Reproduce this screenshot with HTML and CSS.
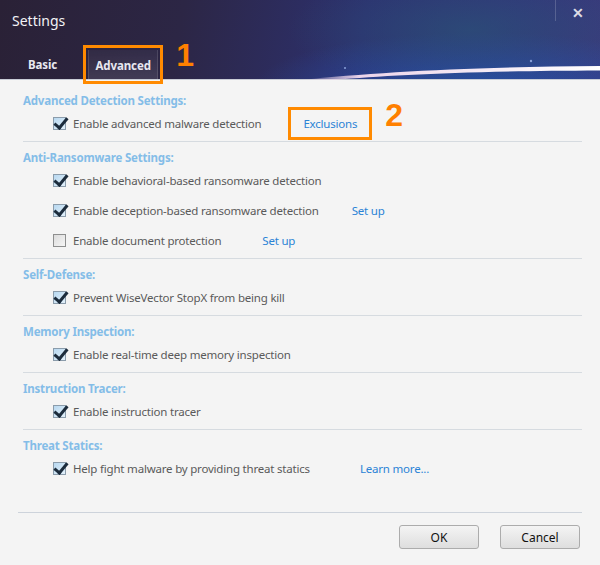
FILE: index.html
```html
<!DOCTYPE html>
<html lang="en">
<head>
    <meta charset="UTF-8">
    <title>Settings</title>
    <link rel="stylesheet" href="styles.css">
</head>
<body>
<div class="dialog">
    <div class="titlebar">
        <svg class="swoosh" width="600" height="80" viewBox="0 0 600 80">
            <defs>
                <linearGradient id="streak" x1="0" y1="0" x2="1" y2="0">
                    <stop offset="0" stop-color="#f4d8ec" stop-opacity="0"/>
                    <stop offset="0.2" stop-color="#f6dcef" stop-opacity="0.95"/>
                    <stop offset="1" stop-color="#ffffff"/>
                </linearGradient>
            </defs>
            <path d="M300 80 C 380 72, 470 67, 600 66 L 600 70.5 C 470 71, 390 75, 335 80 Z" fill="url(#streak)"/>
            <circle cx="345" cy="68" r="1" fill="#8aa0d8"/>
            <circle cx="531" cy="61" r="1.2" fill="#8aa0d8"/>
        </svg>
        <div class="title-row">
            <span class="title">Settings</span>
            <span class="sep"></span>
            <span class="close">&#x2715;</span>
        </div>
        <div class="tabs">
            <span class="tab">Basic</span>
            <span class="tab active">Advanced</span>
            <span class="marker marker-1">1</span>
        </div>
    </div>

    <div class="content">
        <div class="section">
            <div class="heading">Advanced Detection Settings:</div>
            <div class="row">
                <span class="box checked"></span>
                <span class="label">Enable advanced malware detection</span>
                <span class="link link-exclusions">Exclusions</span>
                <span class="marker marker-2">2</span>
            </div>
        </div>
        <div class="section">
            <div class="heading">Anti-Ransomware Settings:</div>
            <div class="row">
                <span class="box checked"></span>
                <span class="label">Enable behavioral-based ransomware detection</span>
            </div>
            <div class="row">
                <span class="box checked"></span>
                <span class="label">Enable deception-based ransomware detection</span>
                <span class="link link-setup1">Set up</span>
            </div>
            <div class="row">
                <span class="box"></span>
                <span class="label">Enable document protection</span>
                <span class="link link-setup2">Set up</span>
            </div>
        </div>
        <div class="section">
            <div class="heading">Self-Defense:</div>
            <div class="row">
                <span class="box checked"></span>
                <span class="label">Prevent WiseVector StopX from being kill</span>
            </div>
        </div>
        <div class="section">
            <div class="heading">Memory Inspection:</div>
            <div class="row">
                <span class="box checked"></span>
                <span class="label">Enable real-time deep memory inspection</span>
            </div>
        </div>
        <div class="section">
            <div class="heading">Instruction Tracer:</div>
            <div class="row">
                <span class="box checked"></span>
                <span class="label">Enable instruction tracer</span>
            </div>
        </div>
        <div class="section last">
            <div class="heading">Threat Statics:</div>
            <div class="row">
                <span class="box checked"></span>
                <span class="label">Help fight malware by providing threat statics</span>
                <span class="link link-learn">Learn more...</span>
            </div>
        </div>
    </div>

    <div class="footer">
        <button class="btn">OK</button>
        <button class="btn">Cancel</button>
    </div>
</div>
</body>
</html>
```

FILE: styles.css
```css
body {
    margin: 0;
    font-family: "Noto Sans", "Open Sans", sans-serif;
    background: #f4f4f4;
}
.dialog {
    width: 600px;
    height: 565px;
    display: flex;
    flex-direction: column;
    background: #f4f4f4;
    overflow: hidden;
}
.titlebar {
    position: relative;
    height: 79px;
    border-bottom: 1px solid #c9cdd6;
    background:
        radial-gradient(ellipse 260px 90px at 470px 30px, rgba(40, 90, 120, 0.55), rgba(40, 90, 120, 0) 70%),
        radial-gradient(ellipse 300px 70px at 480px 85px, rgba(40, 80, 170, 0.9), rgba(40, 80, 170, 0) 75%),
        linear-gradient(100deg, #2a2136 0%, #2c2645 30%, #2d3170 60%, #33357a 85%, #3a3a7c 100%);
    color: #fff;
}
.swoosh {
    position: absolute;
    left: 0;
    top: 0;
}
.title-row {
    position: relative;
    display: flex;
    align-items: flex-start;
    height: 40px;
}
.title {
    margin: 11px 0 0 12px;
    font-size: 14px;
    color: #f2f2f6;
    flex: 1;
}
.sep {
    width: 1px;
    height: 21px;
    background: rgba(255, 255, 255, 0.18);
}
.close {
    width: 44px;
    text-align: center;
    margin-top: 3px;
    font-size: 14px;
    font-weight: bold;
    color: #dcdce4;
}
.tabs {
    position: relative;
    display: flex;
    align-items: flex-end;
    height: 39px;
    padding-left: 28px;
}
.tab {
    display: flex;
    align-items: center;
    height: 29px;
    padding-top: 1px;
    font-size: 11.5px;
    letter-spacing: -0.1px;
    font-weight: bold;
    color: #e8e8f0;
}
.tab.active {
    margin-left: 31px;
    width: 70px;
    justify-content: center;
    box-sizing: border-box;
    background: linear-gradient(rgba(255, 255, 255, 0.03), rgba(255, 255, 255, 0.1));
    border-left: 1px solid rgba(255, 255, 255, 0.12);
    border-right: 1px solid rgba(255, 255, 255, 0.12);
    outline: 3px solid #ff8a00;
    outline-offset: 2px;
}
.marker {
    font-family: "Liberation Sans", Arial, sans-serif;
    font-size: 32px;
    font-weight: bold;
    color: #ff8000;
    line-height: 1;
}
.marker-1 {
    margin: -1px 0 0 18px;
    align-self: flex-start;
}
.content {
    padding: 5px 0 0 23px;
    flex: 1;
}
.section {
    padding: 8px 0 8px;
    border-bottom: 1px solid #d6dbe0;
    margin-right: 18px;
    display: flex;
    flex-direction: column;
    gap: 10px;
}
.section.last {
    border-bottom: none;
}
.heading {
    height: 16px;
    line-height: 16px;
    font-size: 11.5px;
    letter-spacing: -0.2px;
    font-weight: bold;
    color: #84bde8;
    margin-bottom: -6px;
}
.row {
    position: relative;
    display: flex;
    align-items: center;
    height: 20px;
    padding-left: 30px;
    font-size: 11.5px;
    letter-spacing: -0.2px;
    color: #5a5a5a;
}
.box {
    width: 11px;
    height: 11px;
    border: 1px solid #8e8f8f;
    background: linear-gradient(135deg, #dcdcdc, #f6f6f6);
    margin-right: 7px;
    position: relative;
    flex-shrink: 0;
}
.box.checked {
    background: linear-gradient(135deg, #b8d8f0, #e2f0fa);
    border-color: #8b9cab;
}
.box.checked::after {
    content: "";
    position: absolute;
    left: 3px;
    top: -3px;
    width: 5px;
    height: 11px;
    border-right: 3px solid #1c2c3c;
    border-bottom: 3px solid #1c2c3c;
    transform: rotate(40deg);
    transform-origin: center;
}
.label {
    white-space: nowrap;
}
.link {
    color: #2b83d6;
    white-space: nowrap;
}
.link-exclusions {
    margin-left: 28px;
    padding: 8px 14px;
    outline: 3px solid #ff8a00;
    outline-offset: -2px;
}
.marker-2 {
    margin-left: 14px;
    margin-top: -14px;
    align-self: flex-start;
}
.link-setup1 {
    margin-left: 33px;
}
.link-setup2 {
    margin-left: 41px;
}
.link-learn {
    margin-left: 50px;
}
.footer {
    margin: 0 18px 16px;
    border-top: 1px solid #cdd3db;
    padding-top: 12px;
    display: flex;
    justify-content: flex-end;
    gap: 21px;
    padding-right: 2px;
}
.btn {
    width: 80px;
    height: 24px;
    border: 1px solid #acacac;
    border-radius: 3px;
    background: linear-gradient(#f4f4f4, #dedede);
    font-family: "Noto Sans", "Open Sans", sans-serif;
    font-size: 12px;
    color: #111;
}
```
